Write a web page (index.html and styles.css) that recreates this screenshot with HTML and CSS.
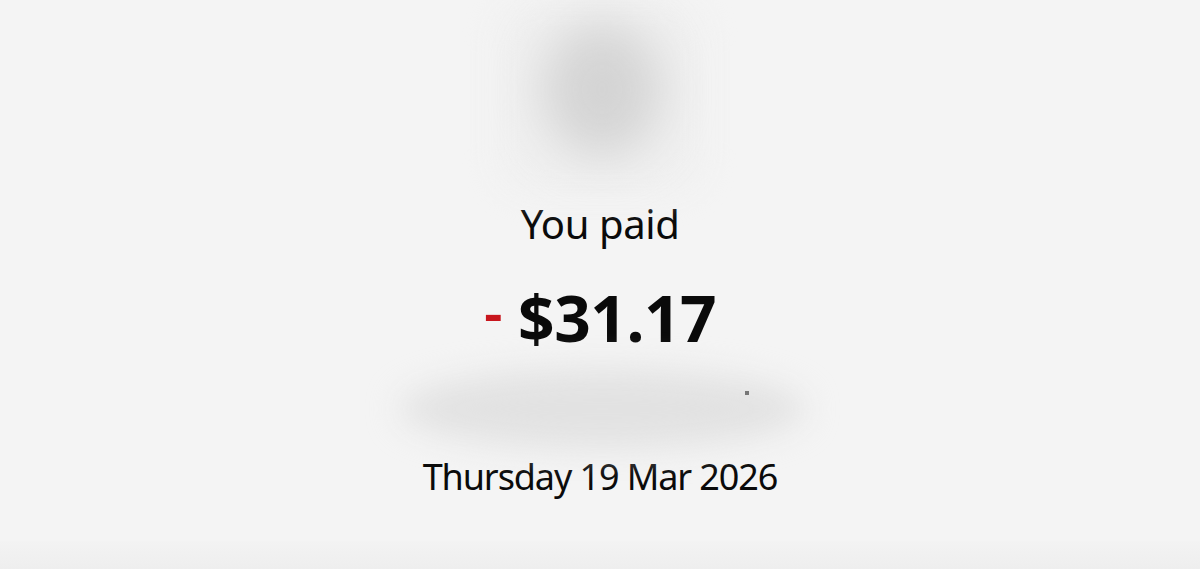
FILE: index.html
```html
<!DOCTYPE html>
<html lang="en">
<head>
    <meta charset="UTF-8">
    <meta name="viewport" content="width=device-width, initial-scale=1.0">
    <title>Payment</title>
    <link rel="stylesheet" href="styles.css">
</head>
<body>
    <div class="receipt">
        <!-- Merchant logo (blurred) -->
        <div class="avatar">
            <div class="avatar-glow"></div>
            <div class="avatar-dot"></div>
        </div>

        <p class="label">You paid</p>
        <p class="amount"><span class="minus">-</span> $31.17</p>

        <!-- Merchant name (blurred) -->
        <div class="merchant">
            <div class="merchant-blur"></div>
            <span class="merchant-mark"></span>
        </div>

        <p class="date">Thursday 19 Mar 2026</p>
    </div>
    <div class="footer-band"></div>
</body>
</html>
```

FILE: styles.css
```css
/* General styling */
body {
    font-family: "Noto Sans", "Open Sans", sans-serif;
    background-color: #f4f4f4;
    margin: 0;
    height: 569px;
    overflow: hidden;
    color: #0a0a0a;
}

.receipt {
    display: flex;
    flex-direction: column;
    align-items: center;
}

/* Blurred logo at the top */
.avatar {
    width: 260px;
    height: 200px;
    position: relative;
}

.avatar-glow {
    position: absolute;
    left: 25px;
    top: 0;
    width: 210px;
    height: 195px;
    border-radius: 40px;
    background-color: #f0f0f0;
    filter: blur(14px);
}

.avatar-dot {
    position: absolute;
    left: 72px;
    top: 22px;
    width: 120px;
    height: 135px;
    border-radius: 50%;
    background-color: #d4d4d4;
    filter: blur(24px);
}

p {
    margin: 0;
}

.label {
    font-size: 40px;
    letter-spacing: -0.4px;
    line-height: 48px;
}

.amount {
    font-size: 64px;
    font-weight: bold;
    line-height: 70px;
    margin-top: 35px;
    letter-spacing: -0.5px;
}

.minus {
    color: #c8161d;
    font-size: 58px;
    font-weight: 600;
    line-height: 0;
    vertical-align: 9px;
}

/* Blurred merchant name */
.merchant {
    width: 460px;
    height: 86px;
    position: relative;
    margin-top: 10px;
}

.merchant-blur {
    position: absolute;
    left: 30px;
    top: 6px;
    width: 405px;
    height: 80px;
    border-radius: 50%;
    background-color: #e2e2e2;
    filter: blur(16px);
}

.merchant-mark {
    position: absolute;
    left: 375px;
    top: 28px;
    width: 4px;
    height: 4px;
    background-color: #777;
}

.date {
    font-size: 36px;
    letter-spacing: -1.1px;
    line-height: 48px;
    margin-top: 4px;
}

.footer-band {
    position: absolute;
    left: 0;
    right: 0;
    bottom: 0;
    height: 28px;
    background: linear-gradient(#f3f3f3, #eeeeee);
}
```
